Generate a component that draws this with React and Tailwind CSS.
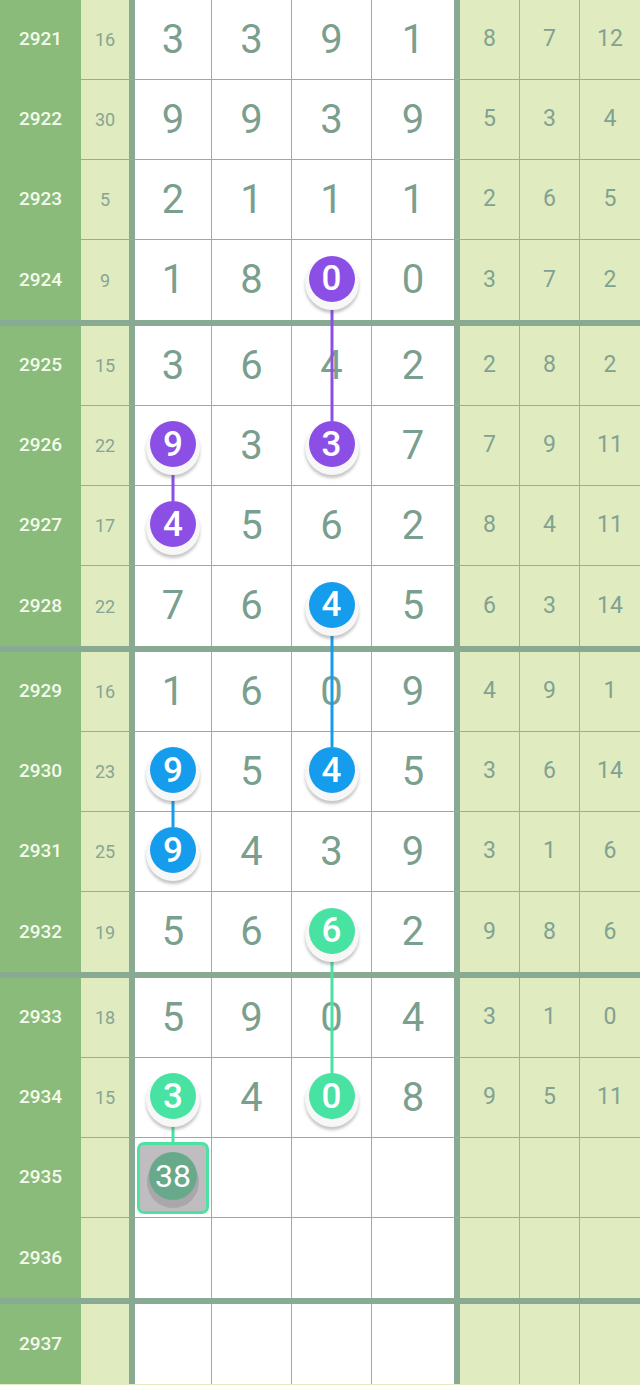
import React from "react";

const rows = [
  ["2921", "16", ["3", "3", "9", "1"], ["8", "7", "12"]],
  ["2922", "30", ["9", "9", "3", "9"], ["5", "3", "4"]],
  ["2923", "5", ["2", "1", "1", "1"], ["2", "6", "5"]],
  ["2924", "9", ["1", "8", "p0", "0"], ["3", "7", "2"]],
  ["2925", "15", ["3", "6", "4", "2"], ["2", "8", "2"]],
  ["2926", "22", ["p9", "3", "p3", "7"], ["7", "9", "11"]],
  ["2927", "17", ["p4", "5", "6", "2"], ["8", "4", "11"]],
  ["2928", "22", ["7", "6", "b4", "5"], ["6", "3", "14"]],
  ["2929", "16", ["1", "6", "0", "9"], ["4", "9", "1"]],
  ["2930", "23", ["b9", "5", "b4", "5"], ["3", "6", "14"]],
  ["2931", "25", ["b9", "4", "3", "9"], ["3", "1", "6"]],
  ["2932", "19", ["5", "6", "g6", "2"], ["9", "8", "6"]],
  ["2933", "18", ["5", "9", "0", "4"], ["3", "1", "0"]],
  ["2934", "15", ["g3", "4", "g0", "8"], ["9", "5", "11"]],
  ["2935", "", ["x38", "", "", ""], ["", "", ""]],
  ["2936", "", ["", "", "", ""], ["", "", ""]],
  ["2937", "", ["", "", "", ""], ["", "", ""]],
];

const ballBg = {
  p: "bg-[#8b4fe6]",
  b: "bg-[#159cec]",
  g: "bg-[#48e2a2]",
};

function Ball({ kind, value }) {
  return (
    <div
      className={`relative z-20 -mt-[3px] w-[46px] h-[46px] rounded-full ${ballBg[kind]} flex items-center justify-center text-white text-[35px] font-medium leading-none shadow-[0_4px_0_4px_#f7f7f7,0_7px_3px_4px_rgba(90,90,90,0.35)]`}
    >
      {value}
    </div>
  );
}

function Box38() {
  return (
    <div className="relative z-20 w-[72px] h-[72px] rounded-[7px] border-[3px] border-[#4ce3a2] bg-[#bfbdbf] flex items-center justify-center">
      <div className="-mt-[4px] w-[48px] h-[48px] rounded-full bg-[#68a98c] flex items-center justify-center text-white text-[32px] leading-none shadow-[0_6px_0_2px_#a9a7a9]">
        38
      </div>
    </div>
  );
}

function WhiteCell({ v, lastCol }) {
  let content = null;
  if (v) {
    const k = v[0];
    if (k === "x") content = <Box38 />;
    else if (ballBg[k]) content = <Ball kind={k} value={v.slice(1)} />;
    else
      content = (
        <span className="text-[40px] leading-none text-[#7a9f8e]">{v}</span>
      );
  }
  return (
    <div
      className={`bg-white flex items-center justify-center ${
        lastCol ? "" : "border-r border-[#97b2a3]"
      }`}
    >
      {content}
    </div>
  );
}

function Row({ r, last }) {
  const [id, sum, mids, rights] = r;
  return (
    <div
      className={`grid grid-cols-[81px_48px_6px_77px_80px_80px_82px_6px_60px_60px_60px] h-[80px] ${
        last ? "" : "border-b border-[#93ae9e]"
      }`}
    >
      <div className="bg-[#8bbb7b] flex items-center justify-center text-[19px] font-medium text-[#f4faec]">
        {id}
      </div>
      <div className="bg-[#e0ebbf] flex items-center justify-center text-[18px] text-[#86a595]">
        {sum}
      </div>
      <div className="bg-[#88aa92]" />
      {mids.map((v, i) => (
        <WhiteCell key={i} v={v} lastCol={i === 3} />
      ))}
      <div className="bg-[#88aa92]" />
      {rights.map((v, i) => (
        <div
          key={i}
          className={`bg-[#e0ebbf] flex items-center justify-center text-[23px] text-[#80a292] ${
            i < 2 ? "border-r border-[#97b2a3]" : ""
          }`}
        >
          {v}
        </div>
      ))}
    </div>
  );
}

const lines = [
  { c: "#8b4fe6", x: 332, y1: 280, y2: 446 },
  { c: "#8b4fe6", x: 173, y1: 446, y2: 526 },
  { c: "#159cec", x: 332, y1: 606, y2: 772 },
  { c: "#159cec", x: 173, y1: 772, y2: 852 },
  { c: "#48e2a2", x: 332, y1: 932, y2: 1098 },
  { c: "#48e2a2", x: 173, y1: 1098, y2: 1150 },
];

export default function App() {
  const groups = [];
  for (let i = 0; i < rows.length; i += 4) groups.push(rows.slice(i, i + 4));
  return (
    <div
      className="relative w-[640px] h-[1385px] overflow-hidden bg-[#e0ebbf]"
      style={{ fontFamily: "Roboto, 'Liberation Sans', sans-serif" }}
    >
      {groups.map((g, gi) => (
        <div key={gi}>
          {g.map((r, ri) => (
            <Row key={ri} r={r} last={ri === g.length - 1} />
          ))}
          {gi < groups.length - 1 && <div className="h-[6px] bg-[#88aa92]" />}
        </div>
      ))}
      <svg
        className="absolute inset-0 z-10 pointer-events-none"
        width="640"
        height="1385"
      >
        {lines.map((l, i) => (
          <line
            key={i}
            x1={l.x}
            x2={l.x}
            y1={l.y1}
            y2={l.y2}
            stroke={l.c}
            strokeWidth="3"
          />
        ))}
      </svg>
    </div>
  );
}
